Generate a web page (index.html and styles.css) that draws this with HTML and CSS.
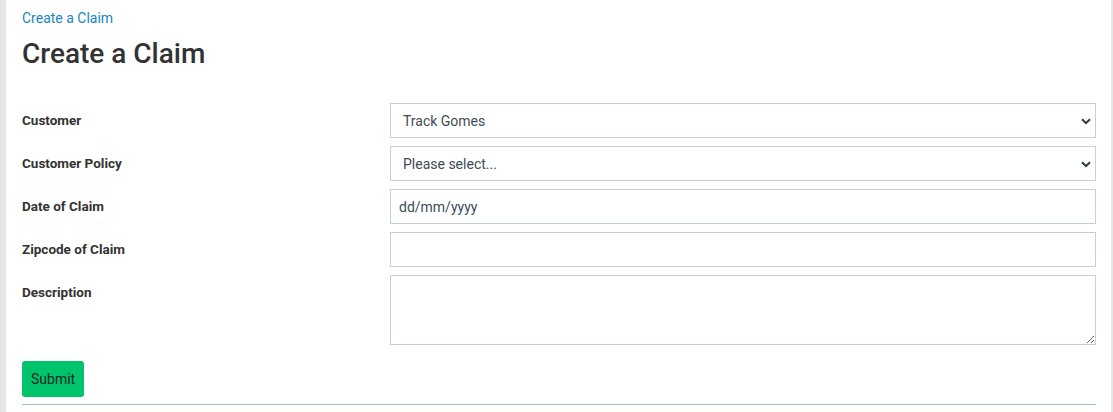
FILE: index.html
```html
<!DOCTYPE html>
<html lang="en">
<head>
<meta charset="utf-8">
<title>Create a Claim</title>
<link rel="stylesheet" href="styles.css">
</head>
<body>
<div class="page">
  <a class="crumb" href="#">Create a Claim</a>
  <h1 class="title">Create a Claim</h1>
  <form class="form">
    <label class="label" for="customer">Customer</label>
    <div class="select-wrap">
      <select id="customer" class="field select">
        <option>Track Gomes</option>
      </select>
      <svg class="chev" width="10" height="7" viewBox="0 0 10 7"><path d="M1 1.2 L5 5 L9 1.2" fill="none" stroke="#2e3f4a" stroke-width="2"/></svg>
    </div>

    <label class="label" for="policy">Customer Policy</label>
    <div class="select-wrap">
      <select id="policy" class="field select">
        <option>Please select...</option>
      </select>
      <svg class="chev" width="10" height="7" viewBox="0 0 10 7"><path d="M1 1.2 L5 5 L9 1.2" fill="none" stroke="#2e3f4a" stroke-width="2"/></svg>
    </div>

    <label class="label" for="date">Date of Claim</label>
    <input id="date" class="field input" type="text" placeholder="dd/mm/yyyy">

    <label class="label" for="zip">Zipcode of Claim</label>
    <input id="zip" class="field input" type="text">

    <label class="label" for="desc">Description</label>
    <textarea id="desc" class="field area"></textarea>
  </form>
  <div class="actions">
    <button class="submit" type="button">Submit</button>
  </div>
  <div class="rule"></div>
</div>
</body>
</html>
```
FILE: styles.css
```css
html, body {
  margin: 0;
  padding: 0;
}
body {
  background: #e4e6e9;
  font-family: Roboto, "Liberation Sans", Arial, sans-serif;
  color: #333;
  height: 412px;
  overflow: hidden;
}
.page {
  margin: 0 2px 0 6px;
  background: #ffffff;
  padding: 8px 15px 0 16px;
  height: 412px;
  box-sizing: border-box;
}
.crumb {
  display: block;
  font-size: 14px;
  line-height: 20px;
  color: #1787c3;
  text-decoration: none;
}
.title {
  margin: 10px 0 0;
  font-size: 28px;
  line-height: 31px;
  font-weight: 500;
  color: #333333;
}
.form {
  margin-top: 34px;
  display: grid;
  grid-template-columns: 368px 1fr;
  row-gap: 8px;
}
.label {
  font-size: 13.5px;
  font-weight: 700;
  line-height: 35px;
  color: #333333;
}
.field {
  box-sizing: border-box;
  width: 100%;
  margin: 0;
  border: 1px solid #c3d1d9;
  border-radius: 0;
  background: #fff;
  font-family: Roboto, "Liberation Sans", Arial, sans-serif;
  font-size: 14px;
  color: #3d4c56;
  outline: none;
}
.select-wrap {
  position: relative;
}
.select {
  -webkit-appearance: none;
  appearance: none;
  height: 35px;
  padding: 0 30px 0 12px;
}
.chev {
  position: absolute;
  right: 5px;
  top: 15px;
  pointer-events: none;
}
.input {
  height: 35px;
  padding: 0 8px;
}
.input::placeholder {
  color: #3d4c56;
  opacity: 1;
}
.area {
  height: 70px;
  padding: 8px;
  resize: vertical;
  display: block;
}
.actions {
  margin-top: 16px;
  display: flex;
}
.submit {
  height: 36px;
  padding: 0 9px;
  border: 0;
  border-radius: 3px;
  background: #00c46c;
  color: #1c2a22;
  font-family: Roboto, "Liberation Sans", Arial, sans-serif;
  font-size: 14px;
}
.rule {
  margin-top: 7px;
  height: 1px;
  background: #9ebccb;
}
```
